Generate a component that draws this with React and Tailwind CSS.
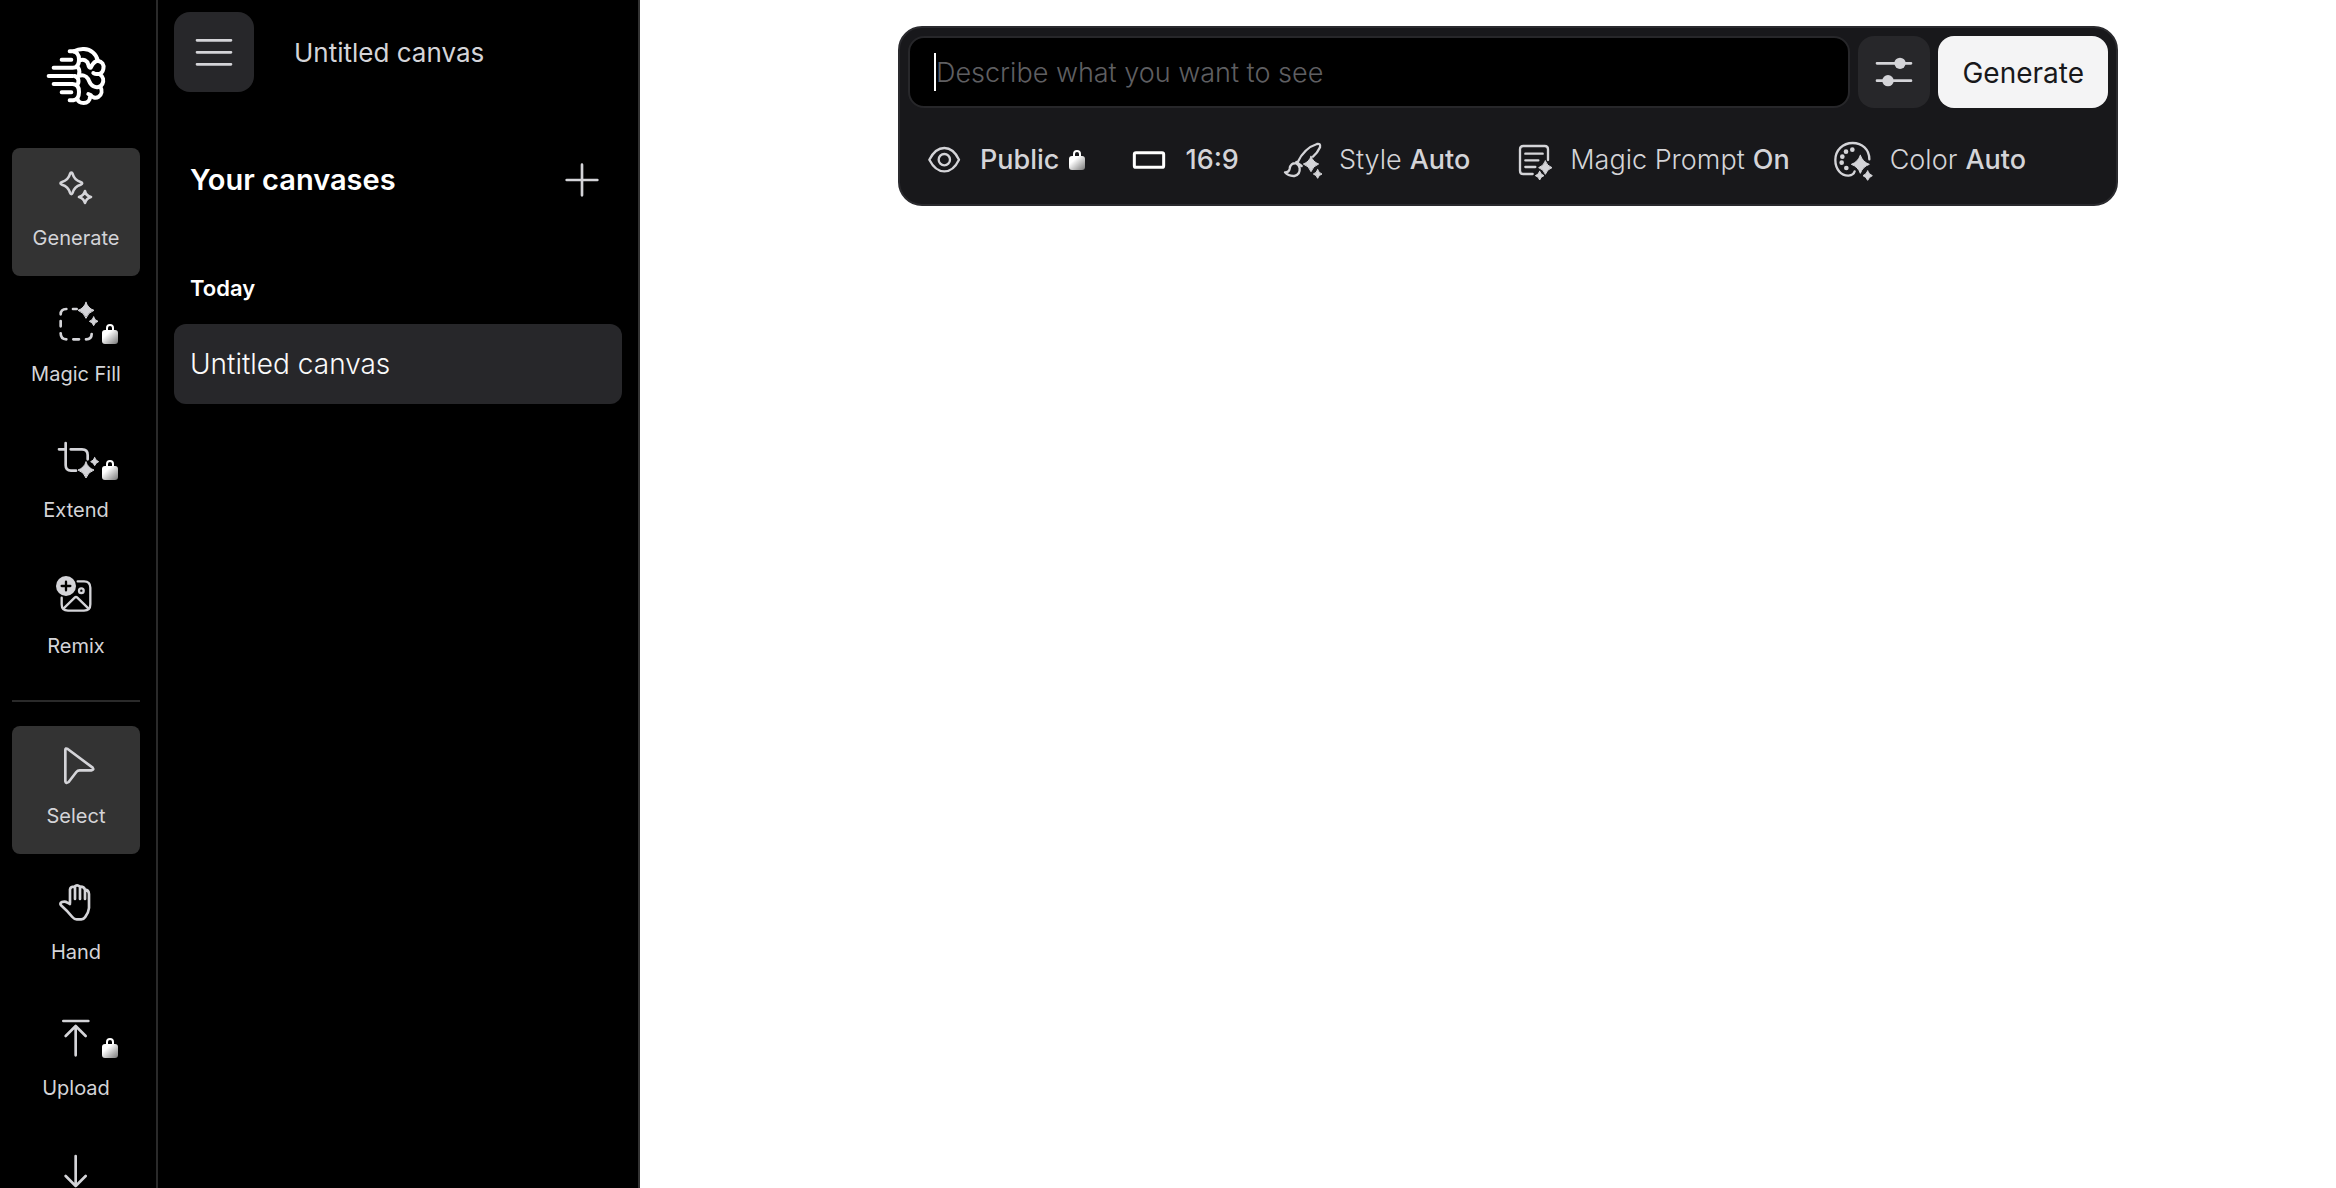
import React from "react";

const star = (cx, cy, r) => {
  const k = Math.round(r * 0.26);
  return `M${cx} ${cy - r}Q${cx + k} ${cy - k} ${cx + r} ${cy}Q${cx + k} ${cy + k} ${cx} ${cy + r}Q${cx - k} ${cy + k} ${cx - r} ${cy}Q${cx - k} ${cy - k} ${cx} ${cy - r}Z`;
};

function Star({ x, y, r }) {
  return <path d={star(x, y, r)} fill="currentColor" strokeWidth="3" />;
}

function Icon({ children, stroke = 8, className = "" }) {
  return (
    <svg
      viewBox="0 0 120 120"
      fill="none"
      stroke="currentColor"
      strokeWidth={stroke}
      strokeLinecap="round"
      strokeLinejoin="round"
      aria-hidden="true"
      className={`size-10 shrink-0 overflow-visible ${className}`}
    >
      {children}
    </svg>
  );
}

function Lock({ className = "" }) {
  return (
    <svg viewBox="0 0 16 20" aria-hidden="true" className={`h-5 w-4 shrink-0 ${className}`}>
      <defs>
        <linearGradient id="lockBody" x1="0" y1="0" x2="1" y2="1">
          <stop offset="0.3" stopColor="#ffffff" />
          <stop offset="1" stopColor="#777777" />
        </linearGradient>
      </defs>
      <path d="M5 8V4Q5 1 8 1Q11 1 11 4V8" fill="none" stroke="#ffffff" strokeWidth="2" />
      <rect x="0" y="6" width="16" height="14" rx="3" fill="url(#lockBody)" />
    </svg>
  );
}

function Logo() {
  return (
    <svg
      viewBox="0 0 192 192"
      fill="none"
      stroke="#ffffff"
      strokeWidth="12"
      strokeLinecap="round"
      strokeLinejoin="round"
      aria-label="Home"
      className="size-16"
    >
      <path d="M53 47H82M53 145H82M14 96H86" />
      <path d="M77 22H88C99 24 105 34 105 47C105 61 99 71 86 71H29" />
      <path d="M77 169H88C99 167 105 157 105 144C105 130 99 120 86 120H29" />
      <path d="M98 67C106 74 107 84 105 90M98 124C106 116 106 100 92 96" />
      <path d="M90 22Q104 14 120 15C140 16 158 30 161 50" />
      <path d="M105 50C120 44 130 50 133 62C134 68 138 71 140 71C144 64 148 52 161 50" />
      <path d="M161 50C174 52 181 62 178 75C176 86 168 91 158 90C152 90 150 88 148 87M168 91C178 98 180 110 175 120C170 130 158 132 148 127C138 122 136 112 132 104C126 94 114 92 104 96" />
      <path d="M169 128C176 140 173 152 164 158C154 164 144 160 140 153L133 150M138 158C138 170 130 177 119 177C109 177 102 172 100 165" />
    </svg>
  );
}

const icons = {
  generate: (
    <Icon>
      <path d="M46 14C48 14 49 15 50 18C54 32 60 38 74 42C80 44 80 48 74 50C60 54 54 60 50 74C48 80 44 80 42 74C38 60 32 54 18 50C12 48 12 44 18 42C32 38 38 32 42 18C43 15 44 14 46 14Z" />
      <path d="M87 69Q89 83 105 87Q91 91 87 105Q83 91 69 87Q83 83 87 69Z" />
    </Icon>
  ),
  fill: (
    <Icon>
      <path d="M14 31Q14 15 31 15M51 15H62M14 51V67M14 88Q14 106 31 106M52 106H69M90 106Q107 106 107 90" />
      <Star x={90} y={19} r={24} />
      <Star x={113} y={52} r={13} />
    </Icon>
  ),
  extend: (
    <Icon>
      <path d="M29 9V76Q29 92 45 92H60M9 28H26M44 28H78Q95 28 95 45V58" />
      <Star x={90} y={90} r={24} />
      <Star x={116} y={65} r={12} />
    </Icon>
  ),
  remix: (
    <Icon stroke={7}>
      <circle cx="30" cy="30" r="30" fill="currentColor" stroke="none" />
      <path d="M30 17V43M17 30H43" stroke="#000000" />
      <path d="M65 16H84Q103 16 103 35V85Q103 104 84 104H36Q17 104 17 85V65" />
      <path d="M23 97L56 65Q60 61 64 65L97 97" />
      <circle cx="76" cy="44" r="7" />
    </Icon>
  ),
  select: (
    <Icon>
      <path d="M28 12Q28 5 35 9L110 65Q115 72 106 73H71Q65 73 61 78L38 108Q29 114 28 106Z" />
    </Icon>
  ),
  hand: (
    <Icon>
      <path d="M42 62V22Q43 14 55 14Q63 6 72 14Q84 13 87 23Q98 24 99 36V78Q98 92 87 106Q83 112 76 112H62Q55 112 49 105Q32 85 15 70Q10 64 18 60Q28 57 34 62L42 66M57 16V51M72 14V51M87 24V51" />
    </Icon>
  ),
  upload: (
    <Icon>
      <path d="M22 9H97M59 24V112M29 54L59 24L89 54" />
    </Icon>
  ),
  download: (
    <Icon>
      <path d="M59 6V96M29 66L59 96L89 66M22 111H97" />
    </Icon>
  ),
};

function ToolButton({ icon, label, active, locked, iconOnly }) {
  return (
    <button
      type="button"
      aria-label={label}
      className={`relative flex size-32 shrink-0 flex-col items-center rounded-lg pt-5 text-[#d4d4d8] ${active ? "bg-[#333333]" : ""}`}
    >
      {icons[icon]}
      {locked && <Lock className="absolute top-10 right-[22px]" />}
      {!iconOnly && <span className="mt-4 text-[20px] leading-7 whitespace-nowrap">{label}</span>}
    </button>
  );
}

function Option({ icon, children }) {
  return (
    <button type="button" className="flex items-center gap-4 whitespace-nowrap text-[#d4d4d8]">
      {icon}
      <span className="flex items-center gap-2">{children}</span>
    </button>
  );
}

export default function App() {
  return (
    <div className="flex h-screen overflow-hidden bg-white font-['Inter',sans-serif]">
      <nav aria-label="Tools" className="flex shrink-0 flex-col items-center gap-2 overflow-hidden border-r-2 border-[#2a2a2a] bg-black px-3 pr-4">
        <div className="mt-11 mb-8 flex shrink-0 items-center">
          <Logo />
        </div>
        <ToolButton icon="generate" label="Generate" active />
        <ToolButton icon="fill" label="Magic Fill" locked />
        <ToolButton icon="extend" label="Extend" locked />
        <ToolButton icon="remix" label="Remix" />
        <hr className="mt-2 mb-4 w-full shrink-0 border-t-2 border-[#2a2a2a]" />
        <ToolButton icon="select" label="Select" active />
        <ToolButton icon="hand" label="Hand" />
        <ToolButton icon="upload" label="Upload" locked />
        <ToolButton icon="download" label="Download" iconOnly />
      </nav>

      <aside className="flex w-[482px] shrink-0 flex-col border-r-2 border-[#333333] bg-black px-4 pt-3">
        <header className="flex items-center gap-10">
          <button type="button" aria-label="Menu" className="flex size-20 items-center justify-center rounded-2xl bg-[#27272a] text-[#d4d4d8]">
            <Icon>
              <path d="M9 25H111M9 61H111M9 97H111" />
            </Icon>
          </button>
          <span className="text-[26px] text-[#d4d4d8]">Untitled canvas</span>
        </header>
        <div className="mt-16 flex h-12 items-center justify-between pr-5 pl-4">
          <h2 className="text-[29px] font-semibold text-white">Your canvases</h2>
          <button type="button" aria-label="New canvas" className="text-[#d4d4d8]">
            <Icon>
              <path d="M60 14V106M14 60H106" />
            </Icon>
          </button>
        </div>
        <h3 className="mt-[68px] pl-4 text-[22px] leading-8 font-semibold text-white">Today</h3>
        <button type="button" className="mt-5 h-20 rounded-xl bg-[#27272a] px-4 text-left text-[28px] font-light text-[#fafafa]">
          Untitled canvas
        </button>
      </aside>

      <main className="flex grow items-start justify-center pt-[26px] pl-10">
        <form
          onSubmit={(e) => e.preventDefault()}
          className="w-full max-w-[1220px] rounded-[24px] border-2 border-[#2a2a2e] bg-[#18181b] text-[27px]"
        >
          <div className="flex gap-2 p-2">
            <label className="flex h-[72px] grow cursor-text items-center rounded-[16px] border-2 border-[#27272a] bg-black pl-6">
              <span className="h-[38px] w-[2px] shrink-0 bg-white" />
              <input
                type="text"
                aria-label="Prompt"
                placeholder="Describe what you want to see"
                className="w-full bg-transparent pt-[2px] font-light text-white outline-none placeholder:text-[#5f5f62]"
              />
            </label>
            <button type="button" aria-label="Settings" className="flex size-[72px] shrink-0 items-center justify-center rounded-[16px] bg-[#27272a] text-[#d4d4d8]">
              <Icon>
                <path d="M9 34H111M9 86H111" />
                <circle cx="78" cy="34" r="17" fill="currentColor" stroke="none" />
                <circle cx="42" cy="86" r="17" fill="currentColor" stroke="none" />
              </Icon>
            </button>
            <button type="submit" className="h-[72px] rounded-[16px] bg-[#f4f4f5] px-6 pt-[2px] text-[28px] text-[#18181b]">
              Generate
            </button>
          </div>
          <div className="flex h-[88px] items-center gap-[44px] pl-6">
            <Option
              icon={
                <Icon stroke={7}>
                  <path d="M16 59Q34 24 61 24Q88 24 105 59Q88 94 61 94Q34 94 16 59Z" />
                  <circle cx="61" cy="59" r="17" />
                </Icon>
              }
            >
              <span className="font-medium">Public</span>
              <Lock className="ml-[2px]" />
            </Option>
            <Option
              icon={
                <Icon stroke={9} className="text-white">
                  <rect x="16" y="38" width="88" height="44" rx="5" />
                </Icon>
              }
            >
              <span className="font-medium">16:9</span>
            </Option>
            <Option
              icon={
                <Icon stroke={7}>
                  <path d="M43 68Q64 24 102 12Q113 9 111 22Q104 38 90 50" />
                  <path d="M40 66L56 78M40 70Q22 68 20 86Q18 97 6 97Q16 109 34 108Q52 104 50 84Q48 74 40 70" />
                  <Star x={84} y={72} r={23} />
                  <Star x={104} y={102} r={13} />
                </Icon>
              }
            >
              <span className="font-light">Style</span>
              <span className="font-medium">Auto</span>
            </Option>
            <Option
              icon={
                <Icon stroke={7}>
                  <path d="M102 60V28Q102 18 92 18H28Q18 18 18 28V92Q18 102 28 102H56M34 41H86M34 61H73M34 81H64" />
                  <Star x={94} y={83} r={20} />
                  <Star x={77} y={107} r={13} />
                </Icon>
              }
            >
              <span className="font-light">Magic Prompt</span>
              <span className="font-medium">On</span>
            </Option>
            <Option
              icon={
                <Icon stroke={7}>
                  <path d="M106 58C106 28 84 9 56 9C26 9 4 31 4 60C4 88 22 108 44 107C54 106 60 102 62 94" />
                  <g fill="currentColor" stroke="none">
                    <circle cx="55" cy="29" r="7" />
                    <circle cx="36" cy="35" r="7" />
                    <circle cx="25" cy="50" r="7" />
                    <circle cx="23" cy="68" r="7" />
                    <circle cx="37" cy="84" r="7" />
                  </g>
                  <Star x={79} y={73} r={27} />
                  <Star x={101} y={107} r={14} />
                </Icon>
              }
            >
              <span className="font-light">Color</span>
              <span className="font-medium">Auto</span>
            </Option>
          </div>
        </form>
      </main>
    </div>
  );
}
